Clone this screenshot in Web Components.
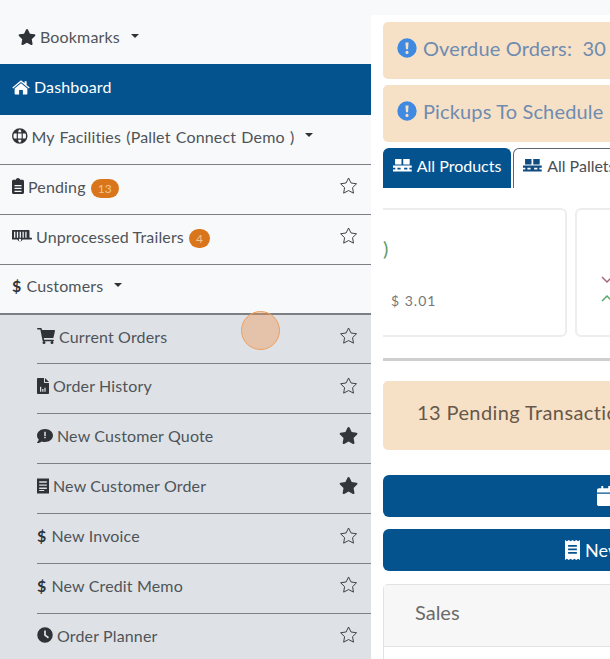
<!DOCTYPE html>
<html>
<head>
<meta charset="utf-8">
<style>
  html, body { margin: 0; height: 100%; }
  body { width: 610px; height: 659px; overflow: hidden; font-family: Lato, "Open Sans", sans-serif; background: #f8f9fa; }
</style>
</head>
<body>
<app-shell>
  <side-menu slot="side">
    <side-item kind="top" icon="star-solid" caret>Bookmarks</side-item>
    <side-item kind="active" icon="home">Dashboard</side-item>
    <side-item kind="facility" icon="globe" caret>My Facilities (Pallet Connect Demo )</side-item>
    <side-item icon="clipboard" fav="off" badge="13">Pending</side-item>
    <side-item icon="trailer" fav="off" badge="4">Unprocessed Trailers</side-item>
    <side-item kind="parent" symbol="$" caret>Customers</side-item>
    <side-item kind="sub" icon="cart" fav="off">Current Orders</side-item>
    <side-item kind="sub" icon="file" fav="off">Order History</side-item>
    <side-item kind="sub" icon="comment" fav="on">New Customer Quote</side-item>
    <side-item kind="sub" icon="list" fav="on">New Customer Order</side-item>
    <side-item kind="sub" symbol="$" fav="off">New Invoice</side-item>
    <side-item kind="sub" symbol="$" fav="off">New Credit Memo</side-item>
    <side-item kind="sub" icon="clock" fav="off">Order Planner</side-item>
  </side-menu>
  <alert-bar slot="main">Overdue Orders:&nbsp; 30</alert-bar>
  <alert-bar slot="main">Pickups To Schedule</alert-bar>
  <tab-row slot="main">
    <tab-pill active>All Products</tab-pill>
    <tab-pill>All Pallets</tab-pill>
  </tab-row>
  <card-strip slot="main"></card-strip>
  <div slot="main" style="height:3px;background:#cfcfcf;margin-bottom:20px"></div>
  <pending-banner slot="main">13 Pending Transactions</pending-banner>
  <wide-button slot="main" icon="calendar" style="--inset: 214px"></wide-button>
  <wide-button slot="main" icon="receipt" style="--inset: 182px">New</wide-button>
  <sales-card slot="main">Sales</sales-card>
</app-shell>
<click-dot></click-dot>

<script>
const ICONS = {
  "star-solid": ['0 0 576 512', '<path fill="currentColor" d="M259.3 17.8L194 150.2 47.9 171.5c-26.2 3.8-36.7 36.1-17.7 54.6l105.7 103-25 145.5c-4.5 26.3 23.2 46 46.4 33.7L288 439.6l130.7 68.7c23.2 12.2 50.9-7.4 46.4-33.7l-25-145.5 105.7-103c19-18.5 8.5-50.8-17.7-54.6L382 150.2 316.7 17.8c-11.7-23.6-45.6-23.9-57.4 0z"/>'],
  "star-line": ['0 0 576 512', '<path fill="none" stroke="currentColor" stroke-width="28" stroke-linejoin="round" d="M288 30l74 150 166 24-120 117 28 165-148-78-148 78 28-165L48 204l166-24z"/>'],
  home: ['0 0 576 512', '<path fill="currentColor" d="M288 40L10 270l26 32 252-208 252 208 26-32-98-81V70h-64v66zM288 132L84 300v170c0 12 10 22 22 22h122V352h120v140h122c12 0 22-10 22-22V300z"/>'],
  globe: ['0 0 496 512', '<path fill="currentColor" fill-rule="evenodd" d="M248 8a248 248 0 1 0 0 496 248 248 0 0 0 0-496zM62 176h92c-3 24-5 50-5 80s2 56 5 80H62c-20-50-20-110 0-160zm130 0h112c4 24 5 50 5 80s-1 56-5 80H192c-4-24-5-50-5-80s1-56 5-80zm150 0h92c20 50 20 110 0 160h-92c3-24 5-50 5-80s-2-56-5-80zM248 46c25 0 44 40 52 92H196c8-52 27-92 52-92zM248 466c-25 0-44-40-52-92h104c-8 52-27 92-52 92z"/>'],
  clipboard: ['0 0 384 512', '<path fill="currentColor" fill-rule="evenodd" d="M192 0c-34 0-62 24-68 56H48C22 56 0 78 0 104v360c0 26 22 48 48 48h288c26 0 48-22 48-48V104c0-26-22-48-48-48h-76C254 24 226 0 192 0zM80 224h224v40H80zm0 90h224v40H80zm0 90h224v40H80z"/>'],
  trailer: ['0 0 640 512', '<path fill="currentColor" fill-rule="evenodd" d="M16 60h520c14 0 24 10 24 24v230h64c8 0 16 8 16 16v24c0 8-8 16-16 16H340a90 90 0 0 1-170 0H16C6 370 0 362 0 352V76c0-10 6-16 16-16zm50 60v190h40V120zm90 0v190h40V120zm90 0v190h40V120zm90 0v190h40V120zm90 0v190h40V120zM255 340a40 40 0 1 0 0 80 40 40 0 0 0 0-80z"/>'],
  cart: ['0 0 576 512', '<path fill="currentColor" d="M0 24C0 11 11 0 24 0h102c11 0 21 8 24 19l12 45h390c16 0 27 15 23 30l-48 210c-3 11-12 18-23 18H218l11 50h289c13 0 24 11 24 24s-11 24-24 24H200c-11 0-21-8-23-19L107 48H24C11 48 0 37 0 24zM224 512a48 48 0 1 0 0-96 48 48 0 0 0 0 96zm256 0a48 48 0 1 0 0-96 48 48 0 0 0 0 96z"/>'],
  file: ['0 0 384 512', '<path fill="currentColor" fill-rule="evenodd" d="M24 0h200v136c0 13 11 24 24 24h136v328c0 13-11 24-24 24H24c-13 0-24-11-24-24V24C0 11 11 0 24 0zm232 0l128 128H256zM96 280v160h40V280zm70 70v90h40v-90zm70-40v130h40V310z"/>'],
  comment: ['0 0 512 512', '<path fill="currentColor" fill-rule="evenodd" d="M256 32C115 32 0 125 0 240c0 50 22 95 58 131-13 50-54 93-55 94-3 3-4 8-2 12s6 3 10 3c66 0 116-32 141-52 32 12 67 20 104 20 141 0 256-93 256-208S397 32 256 32zm-24 90h48v130h-48zm0 160h48v48h-48z"/>'],
  list: ['0 0 384 512', '<path fill="currentColor" fill-rule="evenodd" d="M0 16h384v480H0zm70 90v44h244v-44zm0 100v44h244v-44zm0 100v44h244v-44zm0 80v30h160v-30z"/>'],
  clock: ['0 0 512 512', '<path fill="currentColor" fill-rule="evenodd" d="M256 8a248 248 0 1 0 0 496 248 248 0 0 0 0-496zm-28 100h56v138l100 72-32 46-124-90z"/>'],
  info: ['0 0 512 512', '<path fill="currentColor" fill-rule="evenodd" d="M256 8a248 248 0 1 0 0 496 248 248 0 0 0 0-496zm-40 110h80l-14 170h-52zm40 210a40 40 0 1 1 0 80 40 40 0 0 1 0-80z"/>'],
  pallet: ['0 0 640 512', '<path fill="currentColor" d="M70 30h220v190H70zM350 30h220v190H350zM0 260h640v70H560v60h80v70H0v-70h80v-60H0zM150 330v60h110v-60zm230 0v60h110v-60z"/>'],
  calendar: ['0 0 448 512', '<path fill="currentColor" d="M110 0h50v60h128V0h50v60h62c26 0 48 22 48 48v60H0v-60c0-26 22-48 48-48h62zM0 200h448v264c0 26-22 48-48 48H48c-26 0-48-22-48-48z"/>'],
  receipt: ['0 0 384 512', '<path fill="currentColor" fill-rule="evenodd" d="M0 0l48 30L96 0l48 30 48-30 48 30 48-30 48 30 48-30v512l-48-30-48 30-48-30-48 30-48-30-48 30-48-30-48 30zm80 130v40h224v-40zm0 90v40h224v-40zm0 90v40h224v-40z"/>'],
};

class AppIcon extends HTMLElement {
  connectedCallback() {
    const [box, body] = ICONS[this.getAttribute("name")];
    this.attachShadow({ mode: "open" }).innerHTML = `
      <style>
        :host { display: inline-flex; align-items: center; justify-content: center; }
        svg { display: block; height: var(--size, 16px); }
      </style>
      <svg viewBox="${box}">${body}</svg>`;
  }
}
customElements.define("app-icon", AppIcon);

class AppShell extends HTMLElement {
  constructor() {
    super();
    this.attachShadow({ mode: "open" }).innerHTML = `
      <style>
        :host { display: flex; width: 610px; height: 659px; overflow: hidden; }
        .side { flex: 0 0 371px; }
        .gutter { flex: 0 0 640px; padding-top: 15px; }
        .main { background: #fff; padding: 7px 12px 0; height: 644px; box-sizing: border-box; }
      </style>
      <div class="side"><slot name="side"></slot></div>
      <div class="gutter"><div class="main"><slot name="main"></slot></div></div>`;
  }
}
customElements.define("app-shell", AppShell);

class SideMenu extends HTMLElement {
  constructor() {
    super();
    this.attachShadow({ mode: "open" }).innerHTML = `
      <style>:host { display: block; background: #f8f9fa; height: 659px; overflow: hidden; }</style>
      <slot></slot>`;
  }
}
customElements.define("side-menu", SideMenu);

class SideItem extends HTMLElement {
  connectedCallback() {
    const kind = this.getAttribute("kind") || "row";
    const icon = this.getAttribute("icon");
    const symbol = this.getAttribute("symbol");
    const badge = this.getAttribute("badge");
    const fav = this.getAttribute("fav");
    this.setAttribute("kind", kind);
    this.attachShadow({ mode: "open" }).innerHTML = `
      <style>
        :host { display: block; box-sizing: border-box; height: 49.9px; color: #4f5459; font-size: 16px; letter-spacing: .15px; }
        :host([kind="top"]) { height: 64px; padding-left: 18px; }
        :host([kind="active"]) { height: 51px; background: #04538f; color: #fff; }
        :host([kind="facility"]) { word-spacing: 1px; }
        :host([kind="sub"]) { background: #dee2e6; padding-left: 37px; }
        .row { box-sizing: border-box; height: 100%; display: flex; align-items: center; gap: 4px; padding: 0 13px 6px 12px; border-bottom: 1px solid #7c8085; }
        :host([kind="top"]) .row { border: 0; padding-left: 0; padding-top: 15px; }
        :host([kind="active"]) .row { border: 0; }
        :host([kind="parent"]) .row { border-bottom-width: 2px; }
        :host([kind="sub"]) .row { padding-left: 0; }
        .ico { color: #2f3337; --size: 16px; }
        :host([kind="active"]) .ico { color: #fff; }
        .sym { font-weight: 700; color: #2f3337; font-size: 16px; margin-right: 1px; }
        .caret { width: 0; height: 0; border: 4px solid transparent; border-top-color: #2f3337; border-bottom: 0; margin-left: 7px; margin-top: -2px; }
        .badge { background: #d9761c; color: #f0c48e; font-size: 12px; border-radius: 10px; padding: 2px 7px; min-width: 7px; text-align: center; line-height: 15px; margin: 4px 0 0 1px; }
        .fav { margin-left: auto; color: #33373b; --size: 17px; margin-top: -1px; }
      </style>
      <div class="row">
        ${icon ? `<app-icon class="ico" name="${icon}"></app-icon>` : ""}
        ${symbol ? `<span class="sym">${symbol}</span>` : ""}
        <span><slot></slot></span>
        ${this.hasAttribute("caret") ? `<span class="caret"></span>` : ""}
        ${badge ? `<span class="badge">${badge}</span>` : ""}
        ${fav ? `<app-icon class="fav" name="${fav === "on" ? "star-solid" : "star-line"}"></app-icon>` : ""}
      </div>`;
  }
}
customElements.define("side-item", SideItem);

class AlertBar extends HTMLElement {
  constructor() {
    super();
    this.attachShadow({ mode: "open" }).innerHTML = `
      <style>
        :host { display: flex; align-items: center; gap: 6px; box-sizing: border-box; height: 57px; margin-bottom: 6px; padding: 0 0 6px 14px; background: #f6e1c7; border-radius: 5px; color: #6f8bb0; font-size: 20px; letter-spacing: .15px; white-space: nowrap; }
        app-icon { color: #3f8ae0; --size: 20px; }
      </style>
      <app-icon name="info"></app-icon><span><slot></slot></span>`;
  }
}
customElements.define("alert-bar", AlertBar);

class TabRow extends HTMLElement {
  constructor() {
    super();
    this.attachShadow({ mode: "open" }).innerHTML = `
      <style>:host { display: flex; gap: 2px; height: 40px; margin-bottom: 20px; }</style>
      <slot></slot>`;
  }
}
customElements.define("tab-row", TabRow);

class TabPill extends HTMLElement {
  constructor() {
    super();
    this.attachShadow({ mode: "open" }).innerHTML = `
      <style>
        :host { display: flex; align-items: center; gap: 5px; box-sizing: border-box; padding: 0 9px 6px 9px; color: #4a4f55; font-size: 16px; white-space: nowrap; background: #fff; border: 1px solid #5a6672; border-bottom: 0; border-radius: 6px 6px 0 0; }
        :host([active]) { background: #04538f; color: #fff; border-color: #04538f; }
        app-icon { color: #0f4c81; --size: 15px; }
        :host([active]) app-icon { color: #fff; }
      </style>
      <app-icon name="pallet"></app-icon><span><slot></slot></span>`;
  }
}
customElements.define("tab-pill", TabPill);

class CardStrip extends HTMLElement {
  constructor() {
    super();
    this.attachShadow({ mode: "open" }).innerHTML = `
      <style>
        :host { display: flex; gap: 8px; height: 129px; overflow: hidden; margin-bottom: 21px; }
        .card { flex: none; box-sizing: border-box; height: 129px; background: #fff; border: 2px solid #ededed; border-radius: 6px; display: flex; flex-direction: column; }
        .one { width: 196px; margin-left: -12px; padding: 25px 0 0 10px; color: #5f6368; }
        .paren { color: #5d9a6c; font-size: 20px; line-height: 26px; }
        .price { margin-top: 31px; padding-left: 8px; font-size: 14px; letter-spacing: 1px; color: #777; }
        .two { width: 200px; padding: 66px 0 0 24px; gap: 10px; }
        svg { display: block; width: 12px; height: 8px; fill: none; stroke-width: 1.5; }
      </style>
      <div class="card one"><span class="paren">)</span><span class="price">$ 3.01</span></div>
      <div class="card two">
        <svg viewBox="0 0 12 8" stroke="#a8657c"><path d="M1 1l5 5 5-5"/></svg>
        <svg viewBox="0 0 12 8" stroke="#58a868"><path d="M1 7l5-5 5 5"/></svg>
      </div>`;
  }
}
customElements.define("card-strip", CardStrip);

class PendingBanner extends HTMLElement {
  constructor() {
    super();
    this.attachShadow({ mode: "open" }).innerHTML = `
      <style>
        :host { display: flex; align-items: center; box-sizing: border-box; height: 69px; margin: 0 0 25px; padding: 0 0 8px 34px; background: #f6e1c7; border-radius: 5px; color: #66584a; font-size: 20px; letter-spacing: .4px; white-space: nowrap; }
      </style>
      <slot></slot>`;
  }
}
customElements.define("pending-banner", PendingBanner);

class WideButton extends HTMLElement {
  connectedCallback() {
    this.attachShadow({ mode: "open" }).innerHTML = `
      <style>
        :host { display: flex; align-items: center; gap: 5px; box-sizing: border-box; height: 42px; margin-bottom: 12px; padding-left: var(--inset); background: #04538f; border-radius: 6px; color: #fff; font-size: 18px; }
        app-icon { --size: 20px; }
      </style>
      <app-icon name="${this.getAttribute("icon")}"></app-icon><span><slot></slot></span>`;
  }
}
customElements.define("wide-button", WideButton);

class SalesCard extends HTMLElement {
  constructor() {
    super();
    this.attachShadow({ mode: "open" }).innerHTML = `
      <style>
        :host { display: block; border: 1px solid #e2e2e2; border-bottom: 0; border-radius: 5px 5px 0 0; background: #fff; height: 100px; margin-top: 13px; }
        .head { box-sizing: border-box; height: 62px; display: flex; align-items: center; padding: 0 0 7px 31px; background: #f7f7f7; border-bottom: 1px solid #e2e2e2; color: #6b6b6b; font-size: 20px; }
      </style>
      <div class="head"><slot></slot></div>`;
  }
}
customElements.define("sales-card", SalesCard);

class ClickDot extends HTMLElement {
  constructor() {
    super();
    this.attachShadow({ mode: "open" }).innerHTML = `
      <style>
        :host { position: absolute; left: 241px; top: 311px; width: 39px; height: 39px; box-sizing: border-box; border-radius: 50%; background: rgba(240, 150, 80, .4); border: 1px solid #ee9f5f; }
      </style>`;
  }
}
customElements.define("click-dot", ClickDot);
</script>
</body>
</html>
